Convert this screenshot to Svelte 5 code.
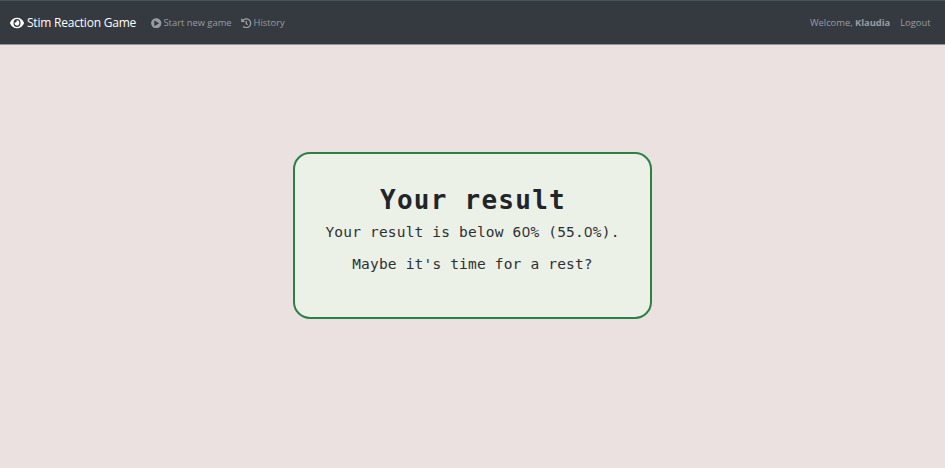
<script>
  const user = 'Klaudia';
  const score = [...'55.0%'];
  const limit = [...'60%'];
</script>

{#snippet digits(chars)}
  {#each chars as c}{#if c === '0'}<span class="zero">0</span>{:else}{c}{/if}{/each}
{/snippet}

<div class="page">
  <nav>
    <a class="brand" href="#home">
      <svg viewBox="0 0 576 512" width="14" height="14" preserveAspectRatio="none"><path fill="currentColor" d="M572.5 241.4C518.3 135.600 410.900 64 288 64S57.700 135.600 3.500 241.400a32 32 0 0 0 0 29.200C57.700 376.400 165.100 448 288 448s230.300-71.600 284.500-177.400a32 32 0 0 0 0-29.200zM288 400a144 144 0 1 1 144-144 144 144 0 0 1-144 144zm0-240a95.300 95.300 0 0 0-25.300 3.800 47.900 47.900 0 0 1-66.900 66.900A95.800 95.800 0 1 0 288 160z"/></svg>
      <span>Stim Reaction Game</span>
    </a>
    <a class="start" href="#start">
      <svg viewBox="0 0 512 512" width="10.500" height="10.500"><path fill="currentColor" d="M256 8C119 8 8 119 8 256s111 248 248 248 248-111 248-248S393 8 256 8zm115.700 272l-176 101c-15.800 8.800-35.700-2.500-35.700-21V152c0-18.400 19.800-29.800 35.700-21l176 107c16.400 9.200 16.400 32.900 0 42z"/></svg>
      <span>Start new game</span>
    </a>
    <a class="history" href="#history">
      <svg viewBox="0 0 512 512" width="10.500" height="10.500"><path fill="currentColor" d="M504 255.500c.3 136.600-111.200 248.400-247.800 248.500-59 0-113.200-20.500-155.800-54.900-11.100-8.900-11.900-25.500-1.800-35.600l11.300-11.300c8.600-8.600 22.400-9.600 31.900-2C173.100 425.100 212.800 440 256 440c101.700 0 184-82.300 184-184 0-101.700-82.300-184-184-184-48.800 0-93.100 19-126.100 49.900l50.800 50.800c10.100 10.100 2.900 27.300-11.300 27.300H24c-8.800 0-16-7.200-16-16V38.600c0-14.300 17.200-21.400 27.300-11.300l49.400 49.400C129.200 34.100 189.600 8 256 8c136.800 0 247.700 110.800 248 247.500zm-180.900 78.800l9.800-12.600c8.100-10.500 6.300-25.500-4.200-33.700L288 256.300V152c0-13.300-10.700-24-24-24h-16c-13.300 0-24 10.700-24 24v135.700l65.400 50.900c10.500 8.100 25.500 6.300 33.700-4.300z"/></svg>
      <span>History</span>
    </a>
    <span class="welcome">Welcome, <b>{user}</b></span>
    <a class="logout" href="#logout">Logout</a>
  </nav>
  <main>
    <section>
      <h1>Your result</h1>
      <p>Your result is below {@render digits(limit)} ({@render digits(score)}).</p>
      <p>Maybe it's time for a rest?</p>
    </section>
  </main>
</div>

<style>
  :global(body) { margin: 0; }
  .page {
    height: 468px;
    display: flex;
    flex-direction: column;
    background: #eae1e0;
    overflow: hidden;
  }
  nav {
    box-sizing: border-box;
    height: 45px;
    flex: none;
    display: flex;
    align-items: center;
    padding: 1px 14.500px 0 10px;
    background: #343a40;
    border-top: 1px solid #495254;
    border-bottom: 1px solid #949294;
    font: 9.350px/14px "Open Sans", "Noto Sans", sans-serif;
    color: #9a9da0;
    white-space: nowrap;
  }
  a { color: inherit; text-decoration: none; display: flex; align-items: center; }
  svg { display: block; flex: none; }
  .brand { color: #fff; font-size: 12px; letter-spacing: -0.210px; gap: 3px; width: 141px; }
  .start { gap: 2px; width: 90px; }
  .history { gap: 2px; }
  .welcome { margin-left: auto; }
  .logout { margin-left: 10px; }
  main {
    flex: 1;
    display: flex;
    justify-content: center;
    align-items: flex-start;
    padding-top: 107px;
  }
  section {
    box-sizing: border-box;
    width: 359px;
    height: 167px;
    border: 2px solid #2b8144;
    border-radius: 17px;
    background: #ebf1e7;
    padding-top: 29px;
    text-align: center;
    font-family: "DejaVu Sans Mono", monospace;
    color: #212529;
    white-space: nowrap;
  }
  h1 { margin: 0 0 4px; font-size: 26px; letter-spacing: 1.250px; line-height: 34px; text-indent: 1px; font-weight: 700; }
  p { margin: 0 0 10px; font-size: 14.500px; letter-spacing: 0.180px; line-height: 22px; color: #2c3033; }
  .zero {
    display: inline-block;
    width: 8.910px;
    letter-spacing: 0;
    font-family: "Noto Sans", sans-serif;
    font-size: 14.800px;
    line-height: 1;
    text-align: center;
  }
</style>
